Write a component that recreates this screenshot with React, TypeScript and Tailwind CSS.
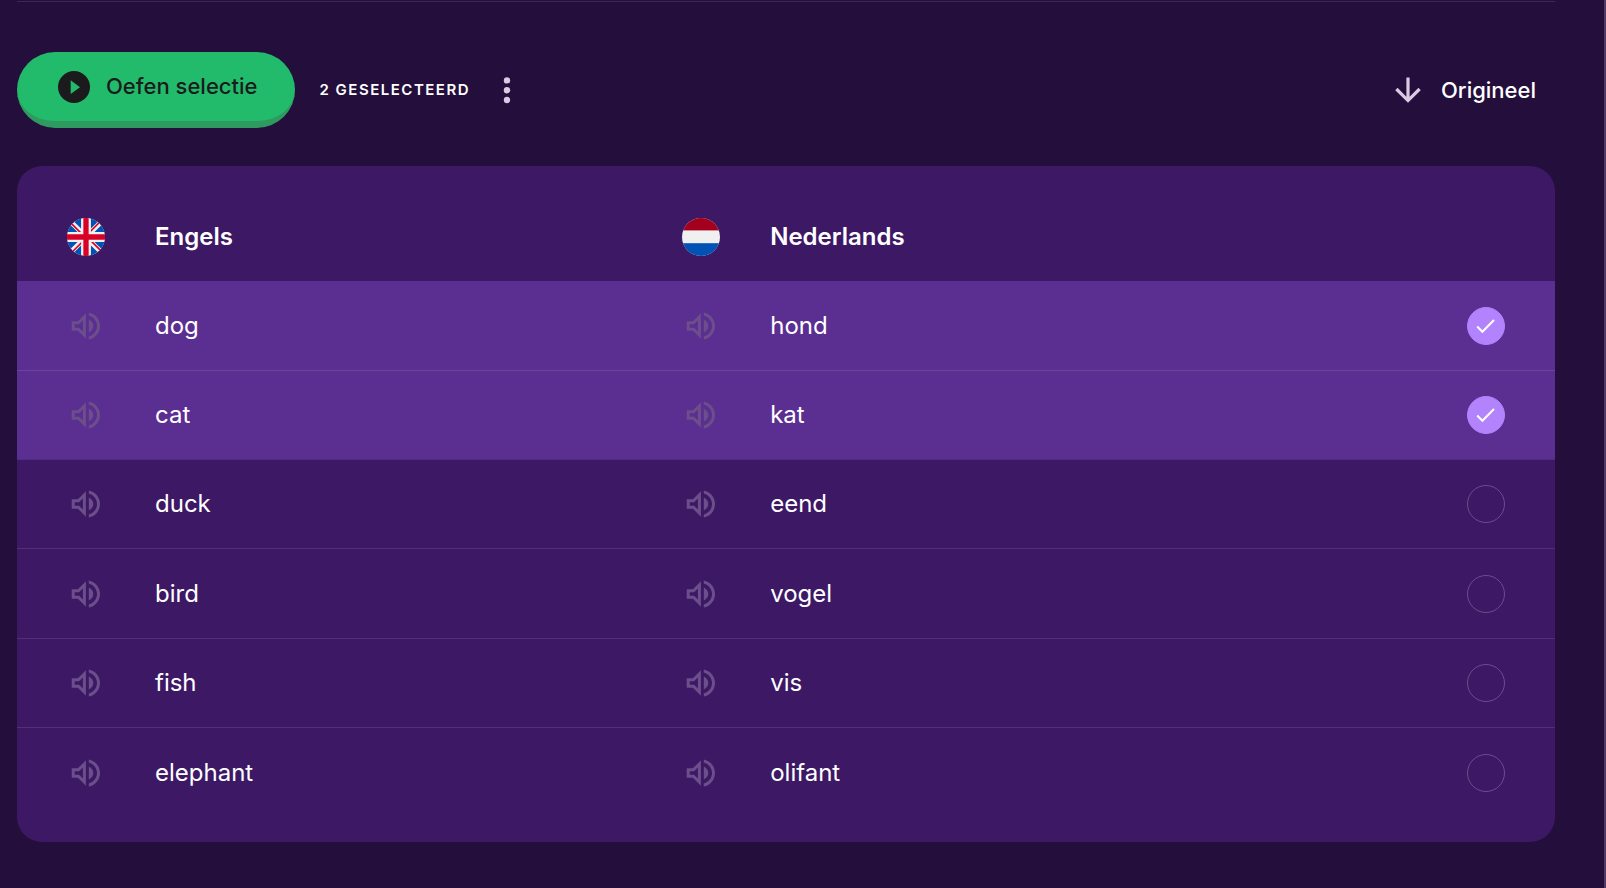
import { useState } from "react";

type Word = { en: string; nl: string };

const words: Word[] = [
  { en: "dog", nl: "hond" },
  { en: "cat", nl: "kat" },
  { en: "duck", nl: "eend" },
  { en: "bird", nl: "vogel" },
  { en: "fish", nl: "vis" },
  { en: "elephant", nl: "olifant" },
];

function SpeakerIcon() {
  return (
    <svg viewBox="0 0 30 28" className="h-[28px] w-[30px]" aria-hidden="true">
      <path
        fill="currentColor"
        fillRule="evenodd"
        d="M.7 9.3H6.9L14.9 1.3V26.7L6.9 18.7H.7ZM3.7 12.3V15.7H8.1L11.9 19.5V8.5L8.1 12.3Z"
      />
      <path fill="currentColor" d="M17.8 7.6C20.6 8.9 22.3 11.3 22.3 14S20.6 19.1 17.8 20.4Z" />
      <path
        fill="currentColor"
        d="M17.8 .4C24.4 1.7 29 7.2 29 14S24.4 26.3 17.8 27.6V24.5C22.7 23.1 26 18.9 26 14S22.7 4.9 17.8 3.5Z"
      />
    </svg>
  );
}

function FlagUK() {
  return (
    <svg viewBox="0 0 512 512" className="size-[38px] shrink-0" aria-hidden="true">
      <circle cx="256" cy="256" r="256" fill="#f0f0f0" />
      <g fill="#0052b4">
        <path d="M52.9 100.1C32.8 126.3 17.6 156.5 8.8 189.2H142Z" />
        <path d="M503.2 189.2C494.4 156.5 479.2 126.3 459.1 100.1L370 189.2Z" />
        <path d="M8.8 322.8C17.6 355.5 32.8 385.7 52.9 411.9L142 322.8Z" />
        <path d="M411.9 52.9C385.7 32.8 355.5 17.6 322.8 8.8V142Z" />
        <path d="M100.1 459.1C126.3 479.2 156.5 494.4 189.2 503.2V370Z" />
        <path d="M189.2 8.8C156.5 17.6 126.3 32.8 100.1 52.9L189.2 142Z" />
        <path d="M322.8 503.2C355.5 494.4 385.7 479.2 411.9 459.1L322.8 370Z" />
        <path d="M370 322.8L459.1 411.9C479.2 385.7 494.4 355.5 503.2 322.8Z" />
      </g>
      <g fill="#d80027">
        <path d="M509.8 220.3H291.7V2.2A258 258 0 0 0 220.3 2.2V220.3H2.2A258 258 0 0 0 2.2 291.7H220.3V509.8A258 258 0 0 0 291.7 509.8V291.7H509.8A258 258 0 0 0 509.8 220.3Z" />
        <path d="M322.8 322.8L437 437Q444.900 429 452.100 420.600L354.300 322.800Z" />
        <path d="M189.200 322.800L75 437Q83 444.900 91.400 452.100L189.200 354.300Z" />
        <path d="M189.200 189.200L75 75Q67.100 83 59.900 91.400L157.700 189.200Z" />
        <path d="M322.800 189.200L437 75Q429 67.100 420.600 59.900L322.800 157.700Z" />
      </g>
    </svg>
  );
}

function FlagNL() {
  return (
    <svg viewBox="0 0 38 38" className="size-[38px] shrink-0" aria-hidden="true">
      <defs>
        <clipPath id="nl-clip">
          <circle cx="19" cy="19" r="19" />
        </clipPath>
      </defs>
      <g clipPath="url(#nl-clip)">
        <rect width="38" height="38" fill="#f0f0f0" />
        <rect width="38" height="12.4" fill="#a2001d" />
        <rect y="25.2" width="38" height="13" fill="#0052b4" />
      </g>
    </svg>
  );
}

function WordCell({ text, lang }: { text: string; lang: string }) {
  return (
    <td className="border-b border-inherit p-0 pl-[50px] in-[tr:last-child]:border-b-0">
      <div className="flex items-center gap-[50px]">
        <button
          type="button"
          aria-label={`${text} beluisteren`}
          className="flex size-[38px] shrink-0 items-center justify-center text-[#6b4e8a]"
        >
          <SpeakerIcon />
        </button>
        <span lang={lang}>{text}</span>
      </div>
    </td>
  );
}

export default function App() {
  const [selected, setSelected] = useState<string[]>(["dog", "cat"]);
  const toggle = (en: string) =>
    setSelected((s) => (s.includes(en) ? s.filter((w) => w !== en) : [...s, en]));

  return (
    <div className="min-h-screen border-r-2 border-[#523a66] bg-[#240e3b] pt-px pr-[49px] pb-[46px] pl-[17px] font-['Inter',sans-serif] text-white">
      <header className="flex items-center border-t border-[#3d2753] pt-[50px] pr-[19px] pb-[38px]">
        <button
          type="button"
          className="flex h-[76px] items-center gap-4 rounded-[38px] border-b-[7px] border-[#2f9a60] bg-[#22bb6c] pr-[38px] pl-[41px] text-[22px] font-medium text-[#1b1b1d]"
        >
          <svg viewBox="0 0 32 32" className="size-8" aria-hidden="true">
            <circle cx="16" cy="16" r="16" fill="#1b1b1d" />
            <path d="M12.7 9.3V23L22 16.2Z" fill="#22bb6c" />
          </svg>
          Oefen selectie
        </button>
        <p className="ml-6 text-[15px] font-semibold tracking-widest uppercase">
          {selected.length} geselecteerd
        </p>
        <button type="button" aria-label="Meer opties" className="ml-6 flex w-[26px] justify-center">
          <svg viewBox="0 0 6 26" className="h-[26px] w-[6px] overflow-visible" fill="#d9cbe4" aria-hidden="true">
            <circle cx="3" cy="3.4" r="3.2" />
            <circle cx="3" cy="13.2" r="3.2" />
            <circle cx="3" cy="23" r="3.2" />
          </svg>
        </button>
        <button type="button" className="ml-auto flex items-center gap-5 text-[22px] font-medium">
          <svg viewBox="0 0 26 26" className="size-[26px]" fill="none" stroke="#d9cbe4" strokeWidth="3.2" aria-hidden="true">
            <path d="M13 .5V23.4M1.4 12L13 23.6L24.6 12" />
          </svg>
          Origineel
        </button>
      </header>

      <main className="overflow-hidden rounded-[25px] bg-[#3d1865] py-[25px]">
        <table className="w-full table-fixed border-separate border-spacing-0 text-left text-[24px]">
          <colgroup>
            <col className="w-2/5" />
            <col className="w-2/5" />
            <col className="w-1/5" />
          </colgroup>
          <thead>
            <tr className="h-[90px]">
              <th scope="col" className="p-0 pt-[2px] pl-[50px] font-semibold">
                <div className="flex items-center gap-[50px]">
                  <FlagUK />
                  Engels
                </div>
              </th>
              <th scope="col" className="p-0 pt-[2px] pl-[50px] font-semibold">
                <div className="flex items-center gap-[50px]">
                  <FlagNL />
                  Nederlands
                </div>
              </th>
              <td />
            </tr>
          </thead>
          <tbody>
            {words.map((w, i) => {
              const on = selected.includes(w.en);
              const nextOn = i + 1 < words.length && selected.includes(words[i + 1].en);
              const line = on ? (nextOn ? "border-[#6d439c]" : "border-[#532a85]") : "border-[#532f78]";
              return (
                <tr
                  key={w.en}
                  className={`h-[89px] nth-[3n+1]:h-[90px] ${line} ${on ? "bg-[#5b2e91]" : ""}`}
                >
                  <WordCell text={w.en} lang="en" />
                  <WordCell text={w.nl} lang="nl" />
                  <td className="border-b border-inherit p-0 pr-[50px] in-[tr:last-child]:border-b-0">
                    <label className="ml-auto grid size-[38px] cursor-pointer place-items-center">
                      <input
                        type="checkbox"
                        aria-label={`${w.en} selecteren`}
                        checked={on}
                        onChange={() => toggle(w.en)}
                        className="col-start-1 row-start-1 size-[38px] appearance-none rounded-full border border-[#6b4e8a] checked:border-[#b283fc] checked:bg-[#b283fc]"
                      />
                      {on && (
                        <svg
                          viewBox="0 0 20 16"
                          className="pointer-events-none col-start-1 row-start-1 h-[16px] w-[20px]"
                          fill="none"
                          stroke="#fff"
                          strokeWidth="2.1"
                          aria-hidden="true"
                        >
                          <path d="M1.2 8.6L6.4 13.8L18 1.9" />
                        </svg>
                      )}
                    </label>
                  </td>
                </tr>
              );
            })}
          </tbody>
        </table>
      </main>
    </div>
  );
}
